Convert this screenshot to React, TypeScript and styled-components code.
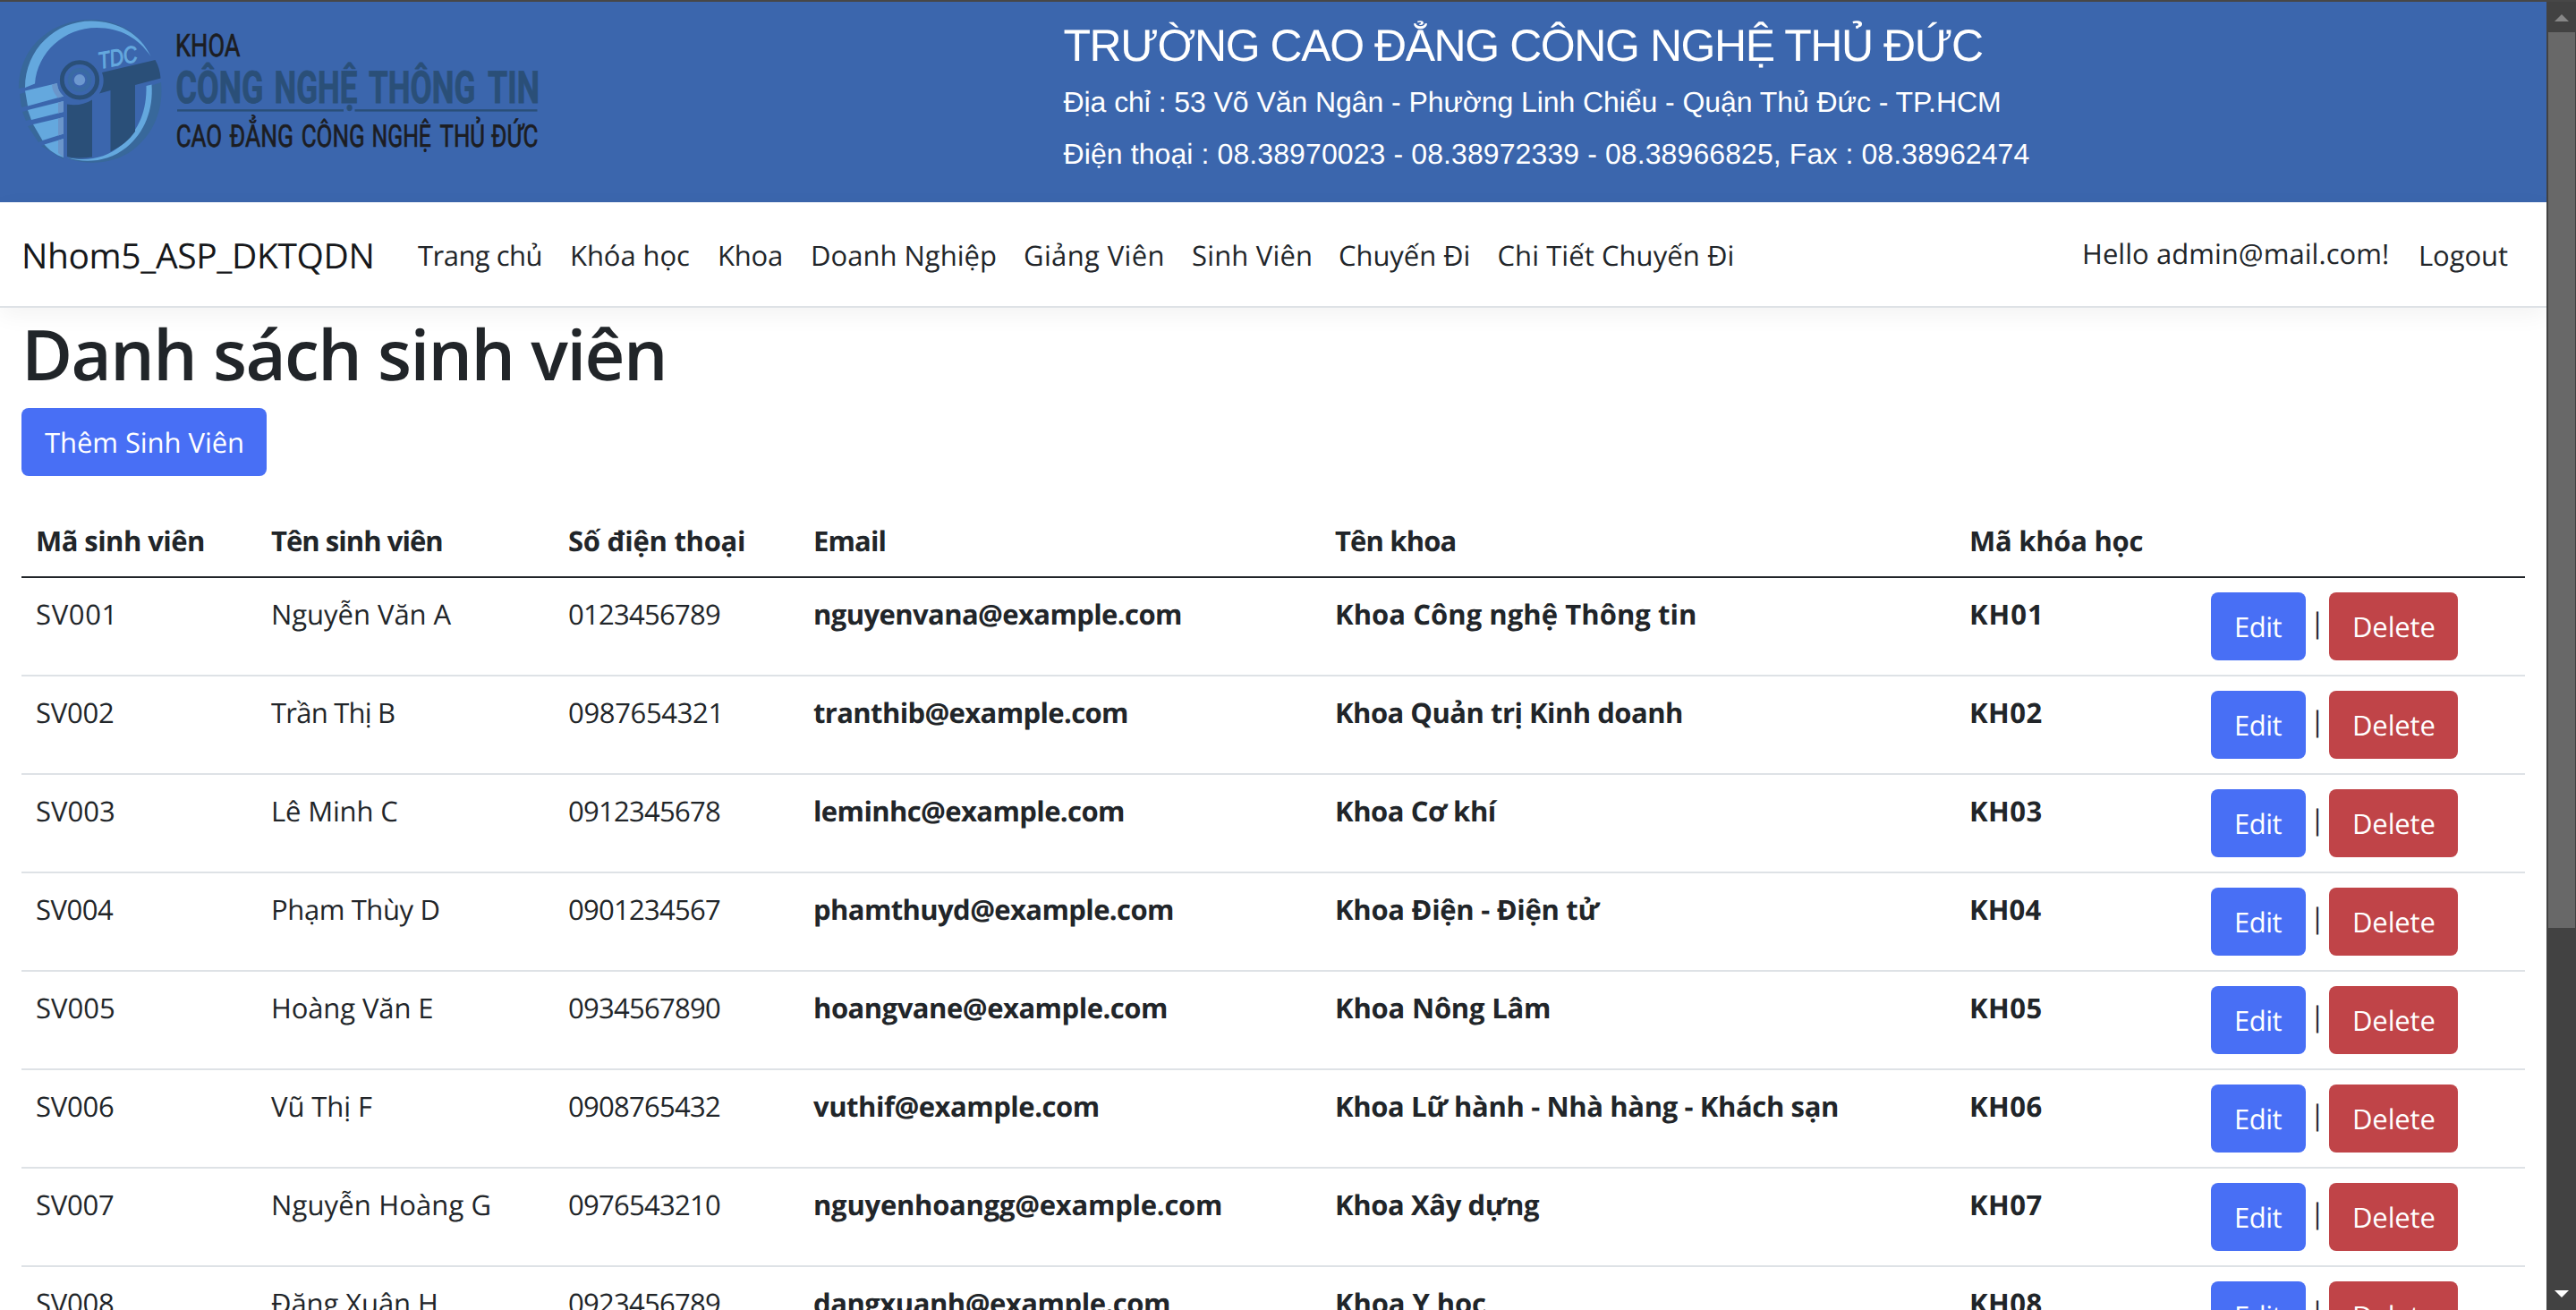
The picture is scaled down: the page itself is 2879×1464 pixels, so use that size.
import React, { useLayoutEffect, useRef, useState } from "react";
import styled, { createGlobalStyle } from "styled-components";

const GlobalStyle = createGlobalStyle`
  *, *::before, *::after { box-sizing: border-box; }
  html, body { margin: 0; padding: 0; overflow: hidden; background: #fff; }
  body {
    font-family: "Open Sans", "Noto Sans", sans-serif;
    font-size: 31px;
    line-height: 48px;
    color: #212529;
    text-rendering: geometricPrecision;
  }
`;

/* ---------- text fitted to a known visible width ---------- */

const FitSpan = styled.span`
  white-space: nowrap;
`;

const Fit = ({ to, children }: { to: number; children: string }) => {
  const ref = useRef<HTMLSpanElement>(null);
  const [spacing, setSpacing] = useState(0);
  useLayoutEffect(() => {
    const el = ref.current;
    const ctx = document.createElement("canvas").getContext("2d") as any;
    if (!el || !ctx) return;
    const cs = getComputedStyle(el);
    ctx.textRendering = "geometricPrecision";
    ctx.font = `${cs.fontWeight} ${cs.fontSize} ${cs.fontFamily}`;
    const right = ctx.measureText(children).actualBoundingBoxRight;
    setSpacing((to - right) / Math.max(1, children.length - 1));
  }, [to, children]);
  return (
    <FitSpan ref={ref} style={{ letterSpacing: `${spacing}px` }}>
      {children}
    </FitSpan>
  );
};

/* ---------- frame ---------- */

const Screen = styled.div`
  display: flex;
  width: 2879px;
  height: 1464px;
  border-top: 2px solid #474747;
  overflow: hidden;
`;

const Page = styled.div`
  width: 2846px;
  height: 1462px;
  overflow: hidden;
  background: #fff;
`;

const ScrollTrack = styled.div`
  display: flex;
  flex-direction: column;
  width: 33px;
  height: 1462px;
  padding: 14px 1px 14px 2px;
  background: #424242;
`;

const Arrow = styled.div<{ $down?: boolean }>`
  width: 16px;
  height: 8px;
  margin: ${(p) => (p.$down ? "auto 0 0 7px" : "0 0 12px 7px")};
  background: ${(p) => (p.$down ? "#ffffff" : "#868686")};
  clip-path: ${(p) =>
    p.$down ? "polygon(0 0, 100% 0, 50% 100%)" : "polygon(50% 0, 100% 100%, 0 100%)"};
`;

const ScrollThumb = styled.div`
  width: 30px;
  height: 1001px;
  background: #686868;
`;

/* ---------- banner ---------- */

const Banner = styled.header`
  display: flex;
  height: 224px;
  background: #3b66ad;
`;

const Logo = styled.svg`
  display: block;
  flex: none;
  width: 640px;
  height: 224px;
  margin-right: 548.5px;
`;

const School = styled.div`
  font-family: "Liberation Sans", Arial, sans-serif;
  color: #fff;
`;

const SchoolName = styled.div`
  height: 80px;
  padding-top: 19px;
  font-size: 50px;
  line-height: 60px;
`;

const SchoolLine = styled.div`
  height: 58px;
  padding-top: 8px;
  font-size: 32px;
  line-height: 48px;
`;

type Word = [text: string, x: number, width: number];

const facultyWords: Word[] = [
  ["CÔNG", 196.5, 98],
  ["NGHỆ", 306.5, 93],
  ["THÔNG", 412, 119.5],
  ["TIN", 545, 58],
];

const collegeWords: Word[] = [
  ["CAO", 196.7, 51.5],
  ["ĐẲNG", 256.5, 71.5],
  ["CÔNG", 336.7, 71],
  ["NGHỆ", 415.5, 66.5],
  ["THỦ", 491.5, 50.5],
  ["ĐỨC", 549, 52.5],
];

const LogoWords = ({ words, y }: { words: Word[]; y: number }) => (
  <>
    {words.map(([text, x, width]) => (
      <text key={text} x={x} y={y} textLength={width} lengthAdjust="spacingAndGlyphs">
        {text}
      </text>
    ))}
  </>
);

const LogoArt = () => (
  <Logo viewBox="0 2 640 224">
    <g fill="#38689b">
      <path d="M21 99 C21 52 58 22 102 22 C124 22 144 31 156 44 C140 31 122 25 102 25 C62 25 31 56 30 97 Z" />
      <path d="M22 105 L29 103 L32 118 L24 120 Z" />
      <path d="M25 125 L32 123 L36 133 L29 135 Z" />
      <path d="M31 141 L38 139 L48 157 L43 159 Z" />
      <path d="M46 163 L50 162 L71 176 L71 178 Z" />
      <path d="M168 96 L180 92 C183 122 172 150 148 168 C126 184 98 184 78 178 L76 175 C100 181 125 177 143 162 C160 148 168 125 168 96 Z" />
    </g>
    <g fill="#64a8de">
      <path d="M28 98 C28 55 62 23.5 102 23.5 C132 23.5 157 38 168.6 63 C155 43 135 31 108 31 C72 31 42 58 39 93.5 Z" />
      <path d="M28 101.5 L64 93 C64 99 67 104 71 107.500 L31 118.500 Z" />
      <path d="M31 123 L71 113 L71 125 L35 134 Z" />
      <path d="M37 139 L71 131 L71 149.500 L47.500 157 Z" />
      <path d="M49.500 161.500 L71 155 L71 176 C62 173 55 168 49.500 161.500 Z" />
      <path d="M163.500 96 L169.500 94.500 C171.500 122 162 148 141 165 C121 181 95 183 75 176 C97 181 118 177 136 162 C156 145 164 123 163.500 96 Z" />
    </g>
    <g fill="#6a95ca">
      <path d="M58 94.500 L64 93 C64 99 67 104 71 107.500 L65 109.500 C61 105 58 100 58 94.500 Z" />
      <path d="M65 114.500 L71 113 L71 125 L65 126.500 Z" />
      <path d="M65 132.500 L71 131 L71 149.500 L65 151.500 Z" />
      <path d="M65 157 L71 155 L71 176 L65 171 Z" />
    </g>
    <g fill="#2a4f78">
      <path d="M75 116.500 C85 118.500 95 116.500 103 111.500 L103 175.500 C94 177 84 177 75 175 Z" />
      <path d="M114 81 L173.500 67 C177 73 179 80 179.500 87.500 L151 95 L151 147 C144 157 135 164 123.500 169.500 L123.500 101 L111 104.500 C116 97 117 89 114 81 Z" />
    </g>
    <circle cx="89" cy="89.300" r="19.700" fill="none" stroke="#2a4f78" strokeWidth="4.800" />
    <circle cx="89" cy="89.300" r="11" fill="none" stroke="#396aa3" strokeWidth="4.500" />
    <circle cx="89" cy="89.300" r="6.200" fill="#6c98cf" />
    <text
      transform="translate(111.500 77) rotate(-11)"
      fontFamily="Liberation Sans, Arial, sans-serif"
      fontStyle="italic"
      fontSize="26"
      fill="#64a8de"
      stroke="#64a8de"
      strokeWidth="1"
      textLength="44"
      lengthAdjust="spacingAndGlyphs"
    >
      TDC
    </text>
    <g fontFamily="Roboto, sans-serif" fontSize="34.500" fill="#1c1d22" stroke="#1c1d22" strokeWidth="0.700">
      <text x="196" y="63.400" fontSize="35.200" textLength="72.500" lengthAdjust="spacingAndGlyphs">
        KHOA
      </text>
      <LogoWords words={collegeWords} y={163.5} />
    </g>
    <g fontFamily="Roboto, sans-serif" fontSize="50" fontWeight="700" fill="#2a4f78" stroke="#2a4f78" strokeWidth="0.800">
      <LogoWords words={facultyWords} y={114.7} />
    </g>
    <g fill="#2a4f78">
      <rect x="198" y="122.200" width="186" height="2.400" />
      <rect x="396.500" y="122.200" width="204" height="2.400" />
    </g>
  </Logo>
);

/* ---------- navigation ---------- */

const Nav = styled.nav`
  display: flex;
  height: 118px;
  padding: 36px 0 0 24px;
  background: #fff;
  border-bottom: 2px solid #dee2e6;
  box-shadow: 0 8px 24px rgba(0, 0, 0, 0.05);
`;

const Brand = styled.a`
  width: 443px;
  padding-top: 1px;
  font-size: 39px;
  line-height: 46px;
  color: #16181b;
`;

const NavLink = styled.a<{ $step: number; $up?: boolean }>`
  width: ${(p) => p.$step}px;
  margin-top: ${(p) => (p.$up ? -2 : 0)}px;
`;

const Spacer = styled.div`
  flex: 1;
`;

const links = [
  { label: "Trang chủ", to: 137.5, step: 170 },
  { label: "Khóa học", to: 133, step: 165 },
  { label: "Khoa", to: 71, step: 104 },
  { label: "Doanh Nghiệp", to: 207, step: 238 },
  { label: "Giảng Viên", to: 155.5, step: 188 },
  { label: "Sinh Viên", to: 133, step: 164 },
  { label: "Chuyến Đi", to: 145.5, step: 177.5 },
  { label: "Chi Tiết Chuyến Đi", to: 263, step: 300 },
];

/* ---------- content ---------- */

const Main = styled.main`
  padding: 0 24px;
`;

const Title = styled.h1`
  margin: 0;
  padding-top: 3px;
  height: 112px;
  font-size: 78px;
  font-weight: 600;
  line-height: 96px;
`;

const Button = styled.a<{ $color: string; $width: number }>`
  display: block;
  width: ${(p) => p.$width}px;
  height: 76px;
  padding: 15px 0 0 26px;
  border-radius: 8px;
  background: ${(p) => p.$color};
  color: #fff;
`;

const Table = styled.table`
  width: 2798px;
  margin-top: 32px;
  table-layout: fixed;
  border-collapse: separate;
  border-spacing: 0;
`;

const HeadCell = styled.th`
  height: 82px;
  padding: 17px 0 0 16px;
  border-bottom: 2px solid #212529;
  text-align: left;
  vertical-align: top;
  font-weight: 700;
`;

const Cell = styled.td<{ $bold?: boolean }>`
  height: 110px;
  padding: 17px 0 0 16px;
  border-bottom: 2px solid #dee2e6;
  vertical-align: top;
  font-weight: ${(p) => (p.$bold ? 700 : 400)};
`;

const ActionCell = styled(Cell)`
  padding-top: 16px;
`;

const Actions = styled.div`
  display: flex;
`;

const Divider = styled.span`
  width: 26px;
  padding-top: 10px;
  text-align: center;
`;

const BLUE = "#486ff5";
const RED = "#c04448";

const columns = [263, 332, 274, 583, 709, 270, 367];

const heads: [string, number][] = [
  ["Mã sinh viên", 188],
  ["Tên sinh viên", 191.3],
  ["Số điện thoại", 197],
  ["Email", 80.5],
  ["Tên khoa", 134.5],
  ["Mã khóa học", 193.5],
];

type Student = [string, string, number, string, string, number, string, number, string];

const students: Student[] = [
  ["SV001", "Nguyễn Văn A", 201.6, "0123456789", "nguyenvana@example.com", 411, "Khoa Công nghệ Thông tin", 403, "KH01"],
  ["SV002", "Trần Thị B", 138, "0987654321", "tranthib@example.com", 351, "Khoa Quản trị Kinh doanh", 388, "KH02"],
  ["SV003", "Lê Minh C", 141.2, "0912345678", "leminhc@example.com", 347, "Khoa Cơ khí", 181.8, "KH03"],
  ["SV004", "Phạm Thùy D", 187.4, "0901234567", "phamthuyd@example.com", 402, "Khoa Điện - Điện tử", 296.5, "KH04"],
  ["SV005", "Hoàng Văn E", 180.2, "0934567890", "hoangvane@example.com", 395, "Khoa Nông Lâm", 240, "KH05"],
  ["SV006", "Vũ Thị F", 113, "0908765432", "vuthif@example.com", 318.7, "Khoa Lữ hành - Nhà hàng - Khách sạn", 562, "KH06"],
  ["SV007", "Nguyễn Hoàng G", 244.6, "0976543210", "nguyenhoangg@example.com", 456, "Khoa Xây dựng", 229, "KH07"],
  ["SV008", "Đặng Xuân H", 184, "0923456789", "dangxuanh@example.com", 398, "Khoa Y học", 168, "KH08"],
];

export default function App() {
  return (
    <>
      <GlobalStyle />
      <Screen>
        <Page>
          <Banner>
            <LogoArt />
            <School>
              <SchoolName>
                <Fit to={1027.5}>TRƯỜNG CAO ĐẲNG CÔNG NGHỆ THỦ ĐỨC</Fit>
              </SchoolName>
              <SchoolLine>
                <Fit to={1046.5}>Địa chỉ : 53 Võ Văn Ngân - Phường Linh Chiểu - Quận Thủ Đức - TP.HCM</Fit>
              </SchoolLine>
              <SchoolLine>
                <Fit to={1079}>Điện thoại : 08.38970023 - 08.38972339 - 08.38966825, Fax : 08.38962474</Fit>
              </SchoolLine>
            </School>
          </Banner>
          <Nav>
            <Brand>
              <Fit to={391.5}>Nhom5_ASP_DKTQDN</Fit>
            </Brand>
            {links.map((l) => (
              <NavLink key={l.label} $step={l.step}>
                <Fit to={l.to}>{l.label}</Fit>
              </NavLink>
            ))}
            <Spacer />
            <NavLink $step={376} $up>
              <Fit to={341}>Hello admin@mail.com!</Fit>
            </NavLink>
            <NavLink $step={143}>
              <Fit to={100}>Logout</Fit>
            </NavLink>
          </Nav>
          <Main>
            <Title>
              <Fit to={717}>Danh sách sinh viên</Fit>
            </Title>
            <Button $color={BLUE} $width={274}>
              <Fit to={221}>Thêm Sinh Viên</Fit>
            </Button>
            <Table>
              <colgroup>
                {columns.map((w, i) => (
                  <col key={i} style={{ width: w }} />
                ))}
              </colgroup>
              <thead>
                <tr>
                  {heads.map(([label, to]) => (
                    <HeadCell key={label}>
                      <Fit to={to}>{label}</Fit>
                    </HeadCell>
                  ))}
                  <HeadCell />
                </tr>
              </thead>
              <tbody>
                {students.map(([id, name, nameTo, phone, mail, mailTo, dept, deptTo, course]) => (
                  <tr key={id}>
                    <Cell>
                      <Fit to={id === "SV001" ? 84.6 : 87}>{id}</Fit>
                    </Cell>
                    <Cell>
                      <Fit to={nameTo}>{name}</Fit>
                    </Cell>
                    <Cell>
                      <Fit to={phone.endsWith("1") ? 167.5 : 170}>{phone}</Fit>
                    </Cell>
                    <Cell $bold>
                      <Fit to={mailTo}>{mail}</Fit>
                    </Cell>
                    <Cell $bold>
                      <Fit to={deptTo}>{dept}</Fit>
                    </Cell>
                    <Cell $bold>
                      <Fit to={course === "KH01" ? 78 : 80.5}>{course}</Fit>
                    </Cell>
                    <ActionCell>
                      <Actions>
                        <Button $color={BLUE} $width={106}>
                          <Fit to={53.5}>Edit</Fit>
                        </Button>
                        <Divider>|</Divider>
                        <Button $color={RED} $width={144}>
                          <Fit to={91.5}>Delete</Fit>
                        </Button>
                      </Actions>
                    </ActionCell>
                  </tr>
                ))}
              </tbody>
            </Table>
          </Main>
        </Page>
        <ScrollTrack>
          <Arrow />
          <ScrollThumb />
          <Arrow $down />
        </ScrollTrack>
      </Screen>
    </>
  );
}
